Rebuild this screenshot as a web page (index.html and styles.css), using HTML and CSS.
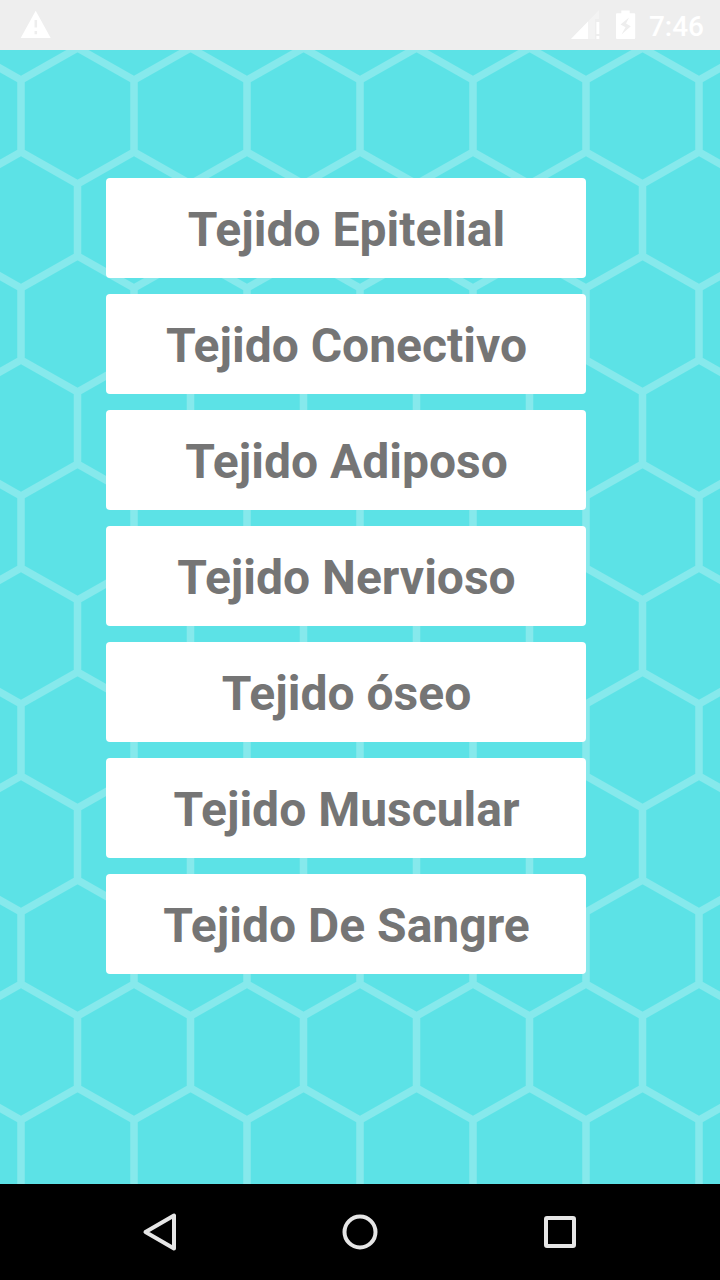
FILE: index.html
```html
<!DOCTYPE html>
<html lang="es">

<head>
  <meta charset="UTF-8">
  <meta name="viewport" content="width=device-width, initial-scale=1">
  <title>Tejidos</title>
  <link rel="stylesheet" href="styles.css">
</head>

<body>
  <div class="status-bar">
    <svg class="warning" width="32" height="28" viewBox="0 0 32 28">
      <path fill="#fff" fill-rule="evenodd" d="M15.7 0.8L30.7 28H0.7zM14.5 10v7.500h2.600v-7.500zM14.500 21v3.200h2.600v-3.200z"/>
    </svg>
    <div class="status-icons">
      <svg class="signal" width="30" height="30" viewBox="0 0 30 30">
        <path fill="#fff" fill-opacity="0.3" d="M28 0V9H24V29H0z"/>
        <path fill="#fff" d="M0 29L17 11.5V29zM25.4 12h2.900v12h-2.900zM25.4 26h2.900v3h-2.900z"/>
      </svg>
      <svg class="battery" width="20" height="30" viewBox="0 0 20 30">
        <path fill="#fff" fill-rule="evenodd" d="M5.3 0.500h8.400v2.700h4.500a1 1 0 0 1 1 1V28a1 1 0 0 1-1 1h-17.200a1 1 0 0 1-1-1V4.200a1 1 0 0 1 1-1h4.300zM13 7.500L4.500 14.500L9.500 17.200L5.500 24.500L14.800 16.300L10 13.500z"/>
      </svg>
      <span class="time">7:46</span>
    </div>
  </div>
  <div class="screen">
    <svg class="hexagons" width="720" height="1134">
      <defs>
        <pattern id="hex" x="21" y="30" width="113" height="208" patternUnits="userSpaceOnUse">
          <path class="hex-line" d="M-56.5 -32L0 0V72L56.5 104V176L0 208V280M56.5 -32L0 0M56.500 -32L113 0V72L56.500 104M56.500 176L113 208V280M169.500 -32L113 0M-56.500 104L0 72M169.500 104L113 72M-56.500 176L0 208M169.500 176L113 208"/>
        </pattern>
      </defs>
      <rect width="720" height="1134" fill="url(#hex)"/>
    </svg>
    <div class="menu">
      <button class="tejido">Tejido Epitelial</button>
      <button class="tejido">Tejido Conectivo</button>
      <button class="tejido">Tejido Adiposo</button>
      <button class="tejido">Tejido Nervioso</button>
      <button class="tejido">Tejido óseo</button>
      <button class="tejido">Tejido Muscular</button>
      <button class="tejido">Tejido De Sangre</button>
    </div>
  </div>
  <div class="nav-bar">
    <svg class="nav-icon" viewBox="0 0 40 40">
      <path d="M34 3.500V36.500L5.500 20z"/>
    </svg>
    <svg class="nav-icon" viewBox="0 0 40 40">
      <circle cx="20" cy="20" r="15.500"/>
    </svg>
    <svg class="nav-icon" viewBox="0 0 40 40">
      <rect x="6" y="6" width="28" height="28" rx="1"/>
    </svg>
  </div>
</body>

</html>
```
FILE: styles.css
```css
body {
  margin: 0;
  width: 720px;
  height: 1280px;
  display: flex;
  flex-direction: column;
  overflow: hidden;
  font-family: Roboto, sans-serif;
}

.status-bar {
  display: flex;
  justify-content: space-between;
  height: 50px;
  padding: 0 16px 0 20px;
  box-sizing: border-box;
  background-color: #EEEEEE;
}
.warning {
  margin-top: 10px;
}
.status-icons {
  display: flex;
}
.signal {
  margin-top: 10px;
}
.battery {
  margin: 10px 13px 0 15px;
}
.time {
  line-height: 53px;
  font-size: 28px;
  font-weight: 500;
  color: #FFFFFF;
}

.screen {
  position: relative;
  flex: 1;
  background-color: #5CE2E6;
}
.hexagons {
  position: absolute;
  top: 0;
  left: 0;
}
.hex-line {
  fill: none;
  stroke: #86E9EC;
  stroke-width: 7.5px;
}

.menu {
  position: relative;
  display: flex;
  flex-direction: column;
  gap: 16px;
  width: 480px;
  padding: 128px 0 0 106px;
}
.tejido {
  height: 100px;
  padding: 3px 0 0 1px;
  border: none;
  border-radius: 4px;
  background-color: #FFFFFF;
  font-family: inherit;
  font-size: 48px;
  font-weight: bold;
  color: #757575;
}

.nav-bar {
  display: flex;
  justify-content: center;
  align-items: center;
  gap: 160px;
  height: 96px;
  background-color: #000000;
}
.nav-icon {
  width: 40px;
  height: 40px;
  fill: none;
  stroke: #E6E6E6;
  stroke-width: 4px;
  stroke-linejoin: round;
}
```
